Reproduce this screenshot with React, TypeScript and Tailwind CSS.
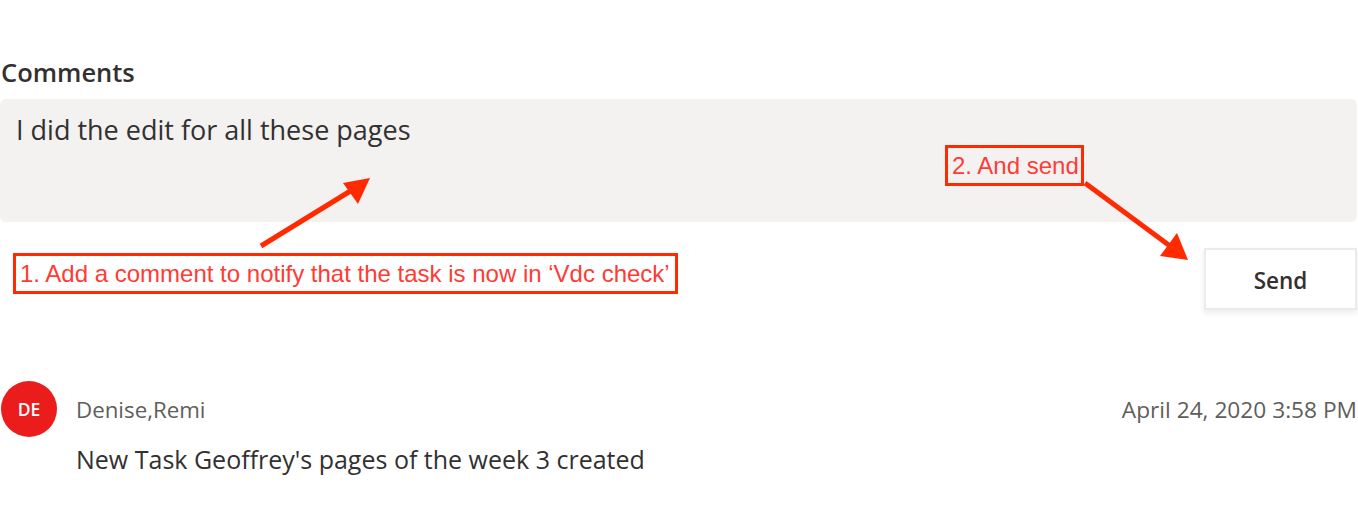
import React from "react";

export default function App() {
  const segoe = { fontFamily: '"Open Sans", "Noto Sans", sans-serif' };
  return (
    <div className="relative w-[1358px] h-[526px] bg-white overflow-hidden" style={segoe}>
      <div className="pt-[56px]">
        <h2 className="ml-[1px] text-[25.5px] leading-[32px] font-semibold text-[#323130]">Comments</h2>
        <div className="mt-[11px] h-[123px] w-[1357px] rounded-[6px] bg-[#f3f2f1] px-[16px] pt-[13px]">
          <p className="text-[27px] leading-[36px] text-[#323130]">I did the edit for all these pages</p>
        </div>
        <div className="mt-[26px] flex justify-end pr-[1px]">
          <button className="h-[62px] w-[153px] border-2 border-[#ebebeb] bg-white pt-[4px] text-[22.5px] font-semibold text-[#323130] shadow-[0_3px_6px_rgba(0,0,0,0.08)]">
            Send
          </button>
        </div>
        <div className="mt-[71px] flex items-start">
          <div className="ml-[1px] flex h-[56px] w-[56px] shrink-0 items-center justify-center rounded-full bg-[#eb1c1c] text-[17.5px] font-semibold text-white">
            DE
          </div>
          <div className="ml-[19px] flex-1 pt-[14px]">
            <div className="flex items-center justify-between">
              <span className="text-[22.3px] leading-[30px] text-[#605e5c]">Denise,Remi</span>
              <span className="pr-[1px] text-[22.7px] leading-[30px] text-[#605e5c]">April 24, 2020 3:58 PM</span>
            </div>
            <p className="mt-[19px] text-[25px] leading-[30px] text-[#323130]">New Task Geoffrey's pages of the week 3 created</p>
          </div>
        </div>
      </div>

      {/* Annotation overlay */}
      <div
        className="absolute left-[13px] top-[253px] flex h-[41px] w-[665px] items-center border-[3px] border-[#ff2a00] pl-[4px] text-[24px] text-[#ff3b35] whitespace-nowrap"
        style={{ fontFamily: '"Liberation Sans", Arial, sans-serif' }}
      >
        1. Add a comment to notify that the task is now in ‘Vdc check’
      </div>
      <div
        className="absolute left-[945px] top-[145px] flex h-[41px] w-[139px] items-center border-[3px] border-[#ff2a00] pl-[4px] text-[24px] text-[#ff3b35] whitespace-nowrap"
        style={{ fontFamily: '"Liberation Sans", Arial, sans-serif' }}
      >
        2. And send
      </div>
      <svg className="pointer-events-none absolute left-0 top-0" width="1358" height="526">
        <line x1="261" y1="246" x2="352" y2="190" stroke="#ff2a00" strokeWidth="5" />
        <polygon points="370,178 343,183 358,204" fill="#ff2a00" />
        <line x1="1085" y1="183" x2="1170" y2="246" stroke="#ff2a00" strokeWidth="5" />
        <polygon points="1188,260 1177,233 1160,256" fill="#ff2a00" />
      </svg>
    </div>
  );
}
